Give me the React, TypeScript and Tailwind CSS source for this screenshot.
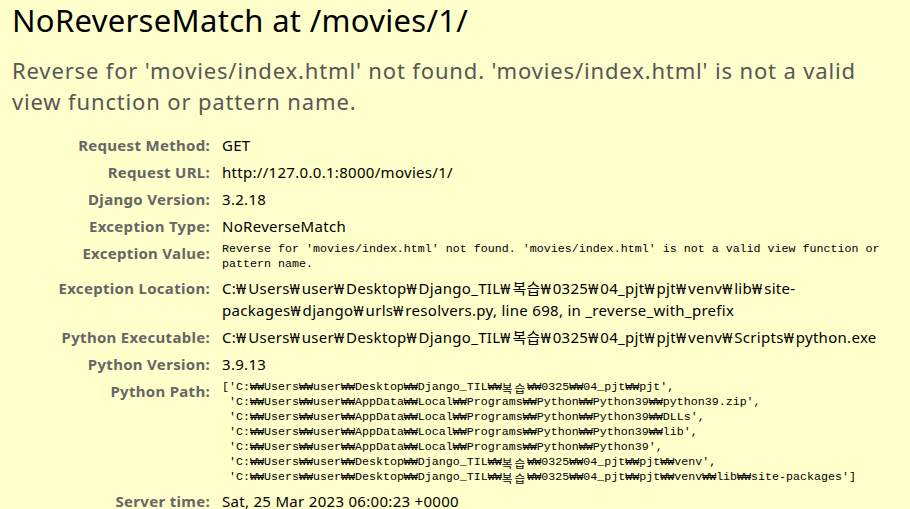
import React from 'react';

const sans = { fontFamily: '"Noto Sans", "Noto Sans CJK KR", sans-serif' };

// the won sign (backslash in the Korean font) is wider in the reference
const Won: React.FC<{ text: string }> = ({ text }) => {
  const parts = text.split('₩');
  return (
    <>
      {parts.map((p, i) => (
        <React.Fragment key={i}>
          {p}
          {i < parts.length - 1 && <span className="tracking-[2px]">₩</span>}
        </React.Fragment>
      ))}
    </>
  );
};

// Hangul in the reference's mono font takes two cells
const Ko: React.FC<{ text: string }> = ({ text }) => {
  const parts = text.split('복습');
  return (
    <>
      {parts.map((p, i) => (
        <React.Fragment key={i}>
          {p}
          {i < parts.length - 1 && (
            <span className="inline-block h-[15px] align-top leading-[15px] font-['Noto_Sans_CJK_KR'] tracking-[2px]">복습</span>
          )}
        </React.Fragment>
      ))}
    </>
  );
};

const pythonPath = [
  "['C:₩₩Users₩₩user₩₩Desktop₩₩Django_TIL₩₩복습₩₩0325₩₩04_pjt₩₩pjt',",
  " 'C:₩₩Users₩₩user₩₩AppData₩₩Local₩₩Programs₩₩Python₩₩Python39₩₩python39.zip',",
  " 'C:₩₩Users₩₩user₩₩AppData₩₩Local₩₩Programs₩₩Python₩₩Python39₩₩DLLs',",
  " 'C:₩₩Users₩₩user₩₩AppData₩₩Local₩₩Programs₩₩Python₩₩Python39₩₩lib',",
  " 'C:₩₩Users₩₩user₩₩AppData₩₩Local₩₩Programs₩₩Python₩₩Python39',",
  " 'C:₩₩Users₩₩user₩₩Desktop₩₩Django_TIL₩₩복습₩₩0325₩₩04_pjt₩₩pjt₩₩venv',",
  " 'C:₩₩Users₩₩user₩₩Desktop₩₩Django_TIL₩₩복습₩₩0325₩₩04_pjt₩₩pjt₩₩venv₩₩lib₩₩site-packages']",
];

const Row: React.FC<{ label: string; children: React.ReactNode }> = ({ label, children }) => (
  <tr>
    <th className="w-[207px] pl-0 pr-[9px] py-[2.5px] text-right align-top font-bold text-[#666] text-[15px] leading-[22px] tracking-[0.3px]">
      {label}
    </th>
    <td className="pl-[3px] pr-0 py-[2.5px] align-top text-black text-[15px] leading-[22px] tracking-[0.3px]">{children}</td>
  </tr>
);

const Mono: React.FC<{ children: React.ReactNode }> = ({ children }) => (
  <pre className="whitespace-pre-wrap tracking-normal font-['Liberation_Mono','DejaVu_Sans_Mono','Noto_Sans_CJK_KR',monospace] text-[11.67px] leading-[15px] text-black">
    {children}
  </pre>
);

export default function App() {
  return (
    <div className="min-h-screen bg-[#ffffcc] px-[12px]" style={sans}>
      <h1 className="text-[31px] leading-[40px] font-normal text-black tracking-[0.3px]">NoReverseMatch at /movies/1/</h1>
      <p className="mt-[15px] text-[22px] leading-[31px] text-[#575757] tracking-[0.85px]">
        Reverse for 'movies/index.html' not found. 'movies/index.html' is not a valid view function or pattern name.
      </p>
      <table className="mt-[14.5px] w-full border-collapse">
        <tbody>
          <Row label="Request Method:">GET</Row>
          <Row label="Request URL:">http://127.0.0.1:8000/movies/1/</Row>
          <Row label="Django Version:">3.2.18</Row>
          <Row label="Exception Type:">NoReverseMatch</Row>
          <Row label="Exception Value:">
            <Mono>Reverse for 'movies/index.html' not found. 'movies/index.html' is not a valid view function or pattern name.</Mono>
          </Row>
          <Row label="Exception Location:">
            <Won text="C:₩Users₩user₩Desktop₩Django_TIL₩복습₩0325₩04_pjt₩pjt₩venv₩lib₩site-packages₩django₩urls₩resolvers.py, line 698, in _reverse_with_prefix" />
          </Row>
          <Row label="Python Executable:">
            <Won text="C:₩Users₩user₩Desktop₩Django_TIL₩복습₩0325₩04_pjt₩pjt₩venv₩Scripts₩python.exe" />
          </Row>
          <Row label="Python Version:">3.9.13</Row>
          <Row label="Python Path:">
            <Mono>
              {pythonPath.map((l, i) => (
                <React.Fragment key={i}>
                  <Ko text={l} />
                  {i < pythonPath.length - 1 && '\n'}
                </React.Fragment>
              ))}
            </Mono>
          </Row>
          <Row label="Server time:">Sat, 25 Mar 2023 06:00:23 +0000</Row>
        </tbody>
      </table>
    </div>
  );
}
